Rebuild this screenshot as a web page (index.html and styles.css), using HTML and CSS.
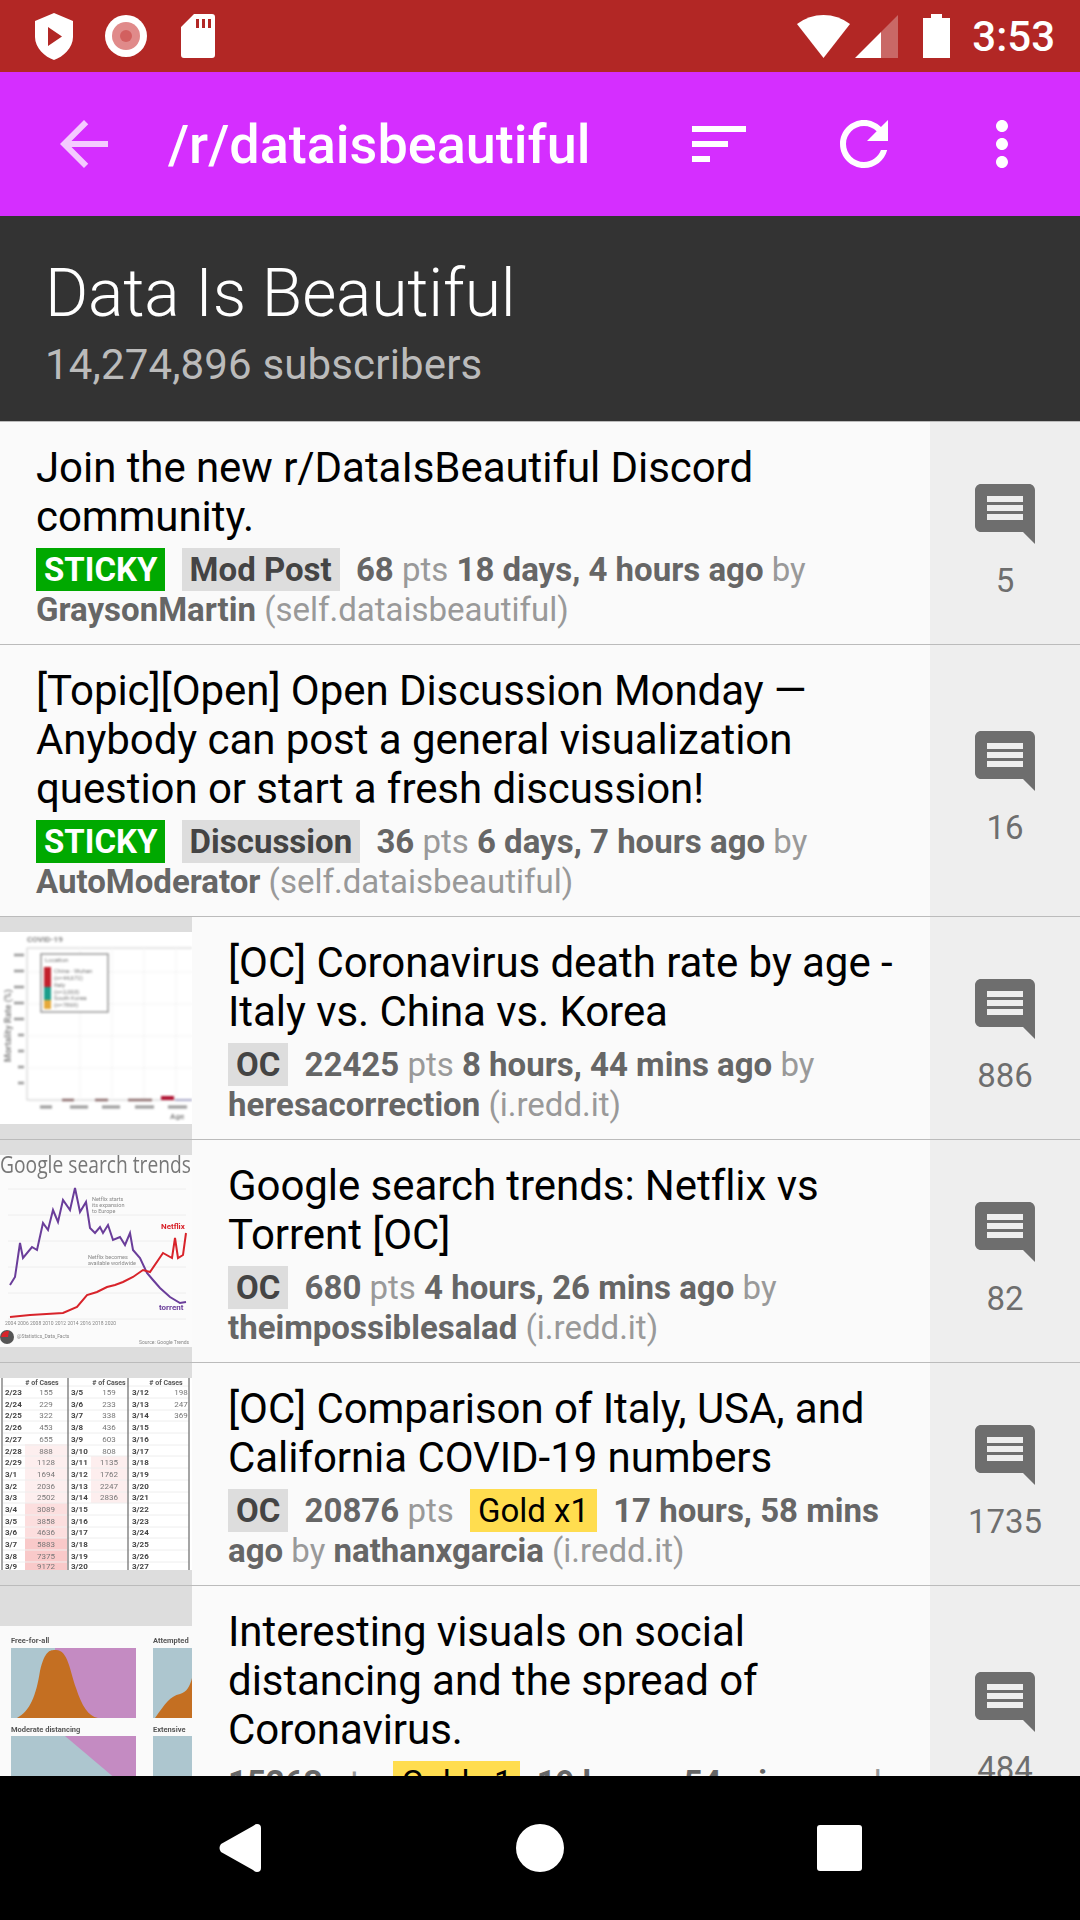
FILE: index.html
```html
<!DOCTYPE html>
<html>
<head>
    <meta charset="UTF-8">
    <title>/r/dataisbeautiful</title>
    <link rel="stylesheet" href="styles.css">
</head>
<body>
<div class="screen">
    <!-- Android status bar -->
    <div class="status-bar">
        <svg class="st-shield" viewBox="0 0 38 47"><path fill="#fff" fill-rule="evenodd" d="M19 0 L38 8 V24 C38 35 28 44 19 47 C10 44 0 35 0 24 V8 Z M13 14 V33 L27 23.5 Z"/></svg>
        <svg class="st-record" viewBox="0 0 42 44"><circle cx="21" cy="22" r="21" fill="#fff"/><circle cx="21" cy="22" r="14" fill="#e08a8a"/><circle cx="21" cy="22" r="6" fill="#d2605f"/></svg>
        <svg class="st-sd" viewBox="0 0 34 44"><path fill="#fff" fill-rule="evenodd" d="M13 0 H31 Q34 0 34 3 V41 Q34 44 31 44 H3 Q0 44 0 41 V13 Z M15 5 V14 H18 V5 Z M21 5 V14 H24 V5 Z M27 5 V14 H30 V5 Z"/></svg>
        <div class="status-right">
            <svg class="st-wifi" viewBox="0 0 53 43"><path fill="#fff" d="M26.5 43 L0 9 Q12 0 26.5 0 Q41 0 53 9 Z"/></svg>
            <svg class="st-signal" viewBox="0 0 43 43"><path fill="#fff" fill-opacity=".3" d="M43 0 V43 H26 V17 Z"/><path fill="#fff" d="M26 17 V43 H0 Z"/></svg>
            <svg class="st-battery" viewBox="0 0 27 44"><path fill="#fff" d="M8 0 H19 V4 H27 V44 H0 V4 H8 Z"/></svg>
            <span class="clock">3:53</span>
        </div>
    </div>

    <!-- toolbar -->
    <div class="toolbar">
        <svg class="tb-icon tb-back" viewBox="0 0 24 24"><path fill="#fff" d="M20 11H7.83l5.59-5.59L12 4l-8 8 8 8 1.41-1.41L7.83 13H20v-2z"/></svg>
        <div class="tb-title">/r/dataisbeautiful</div>
        <svg class="tb-icon tb-sort" viewBox="0 0 24 24"><path fill="#fff" d="M3 18h6v-2H3v2zM3 6v2h18V6H3zm0 7h12v-2H3v2z"/></svg>
        <svg class="tb-icon tb-refresh" viewBox="0 0 24 24"><path fill="#fff" d="M17.65 6.35C16.2 4.9 14.21 4 12 4c-4.42 0-7.99 3.58-7.99 8s3.57 8 7.99 8c3.73 0 6.84-2.55 7.73-6h-2.08c-.82 2.33-3.04 4-5.65 4-3.31 0-6-2.69-6-6s2.69-6 6-6c1.66 0 3.14.69 4.22 1.78L13 11h7V4l-2.35 2.35z"/></svg>
        <svg class="tb-icon tb-more" viewBox="0 0 24 24"><path fill="#fff" d="M12 8c1.1 0 2-.9 2-2s-.9-2-2-2-2 .9-2 2 .9 2 2 2zm0 2c-1.1 0-2 .9-2 2s.9 2 2 2 2-.9 2-2-.9-2-2-2zm0 6c-1.1 0-2 .9-2 2s.9 2 2 2 2-.9 2-2-.9-2-2-2z"/></svg>
    </div>

    <!-- subreddit header -->
    <div class="sub-header">
        <div class="sub-name">Data Is Beautiful</div>
        <div class="sub-count">14,274,896 subscribers</div>
    </div>

    <!-- posts -->
    <div class="post-list">

        <div class="post">
            <div class="post-body">
                <div class="post-title">Join the new r/DataIsBeautiful Discord community.</div>
                <div class="post-meta"><span class="tag tag-sticky">STICKY</span> <span class="tag tag-flair">Mod Post</span> <b>68</b> pts <b>18 days, 4 hours ago</b> by <b>GraysonMartin</b> (self.dataisbeautiful)</div>
            </div>
            <div class="post-comments">
                <svg class="comment-icon" viewBox="0 0 24 24"><path d="M21.99 4c0-1.1-.89-2-1.99-2H4c-1.1 0-2 .9-2 2v12c0 1.1.9 2 2 2h14l4 4-.01-18zM18 14H6v-2h12v2zm0-3H6V9h12v2zm0-3H6V6h12v2z"/></svg>
                <div class="comment-count">5</div>
            </div>
        </div>

        <div class="post">
            <div class="post-body">
                <div class="post-title">[Topic][Open] Open Discussion Monday — Anybody can post a general visualization question or start a fresh discussion!</div>
                <div class="post-meta"><span class="tag tag-sticky">STICKY</span> <span class="tag tag-flair">Discussion</span> <b>36</b> pts <b>6 days, 7 hours ago</b> by <b>AutoModerator</b> (self.dataisbeautiful)</div>
            </div>
            <div class="post-comments">
                <svg class="comment-icon" viewBox="0 0 24 24"><path d="M21.99 4c0-1.1-.89-2-1.99-2H4c-1.1 0-2 .9-2 2v12c0 1.1.9 2 2 2h14l4 4-.01-18zM18 14H6v-2h12v2zm0-3H6V9h12v2zm0-3H6V6h12v2z"/></svg>
                <div class="comment-count">16</div>
            </div>
        </div>

        <div class="post">
            <div class="thumb">
                <svg class="thumb-img" viewBox="0 0 192 192">
                    <rect width="192" height="192" fill="#fff"/>
                    <g class="soft">
                        <text x="27" y="10" font-size="8" font-weight="700" fill="#888">COVID-19</text>
                        <path d="M27 16 H192 M27 16 V168 H192" fill="none" stroke="#ccc" stroke-width="1"/>
                        <path d="M80 16 V168 M112 16 V168 M144 16 V168 M176 16 V168 M27 40 H192 M27 72 H192 M27 104 H192 M27 136 H192" stroke="#f3f3f3" stroke-width="1"/>
                        <rect x="41" y="22" width="67" height="58" fill="#fff" stroke="#999" stroke-width="1.5"/>
                        <rect x="44" y="35" width="7" height="20" fill="#c2202c"/>
                        <rect x="44" y="55" width="7" height="13" fill="#1b9e8b"/>
                        <rect x="44" y="68" width="7" height="9" fill="#e5a93b"/>
                        <text x="45" y="30" font-size="6" fill="#777">Location</text>
                        <text x="54" y="41" font-size="6" fill="#777">China - Wuhan</text>
                        <text x="54" y="48" font-size="6" fill="#777">(n=44,672)</text>
                        <text x="54" y="55" font-size="6" fill="#777">Italy</text>
                        <text x="54" y="62" font-size="6" fill="#777">(n=2,003)</text>
                        <text x="54" y="68" font-size="6" fill="#777">South Korea</text>
                        <text x="54" y="75" font-size="6" fill="#777">(n=7869)</text>
                        <text x="11" y="130" font-size="9" font-weight="700" fill="#888" transform="rotate(-90 11 130)">Mortality Rate (%)</text>
                        <path d="M14 23 H24 M14 39 H24 M14 55 H24 M14 71 H24 M14 87 H24 M18 103 H24 M18 119 H24 M18 135 H24 M18 151 H24" stroke="#999" stroke-width="2.5"/>
                        <path d="M62 168 H74 M95 168 H108 M128 168 H152" stroke="#8a6b6b" stroke-width="2.5"/>
                        <path d="M161 166 H174" stroke="#b01030" stroke-width="4"/>
                        <path d="M175 168 H192" stroke="#a9a9c9" stroke-width="2"/>
                        <path d="M40 175 H52 M70 175 H88 M102 175 H120 M135 175 H154 M168 175 H187" stroke="#999" stroke-width="3"/>
                        <text x="170" y="187" font-size="8" font-weight="700" fill="#888">Age</text>
                    </g>
                </svg>
            </div>
            <div class="post-body">
                <div class="post-title">[OC] Coronavirus death rate by age - Italy vs. China vs. Korea</div>
                <div class="post-meta"><span class="tag tag-flair">OC</span> <b>22425</b> pts <b>8 hours, 44 mins ago</b> by <b>heresacorrection</b> (i.redd.it)</div>
            </div>
            <div class="post-comments">
                <svg class="comment-icon" viewBox="0 0 24 24"><path d="M21.99 4c0-1.1-.89-2-1.99-2H4c-1.1 0-2 .9-2 2v12c0 1.1.9 2 2 2h14l4 4-.01-18zM18 14H6v-2h12v2zm0-3H6V9h12v2zm0-3H6V6h12v2z"/></svg>
                <div class="comment-count">886</div>
            </div>
        </div>

        <div class="post">
            <div class="thumb">
                <svg class="thumb-img" viewBox="0 0 192 192">
                    <rect width="192" height="192" fill="#fbfbfb"/>
                    <g class="soft-less">
                        <text x="0" y="18" font-size="23" font-family="Open Sans" fill="#777" textLength="191" lengthAdjust="spacingAndGlyphs">Google search trends</text>
                        <path d="M8 34 H186 M8 60 H186 M8 86 H186 M8 112 H186 M8 138 H186 M8 164 H186" stroke="#eee" stroke-width="1"/>
                        <polyline fill="none" stroke="#6a3d9a" stroke-width="2" points="10,130 15,122 20,88 23,103 32,92 37,95 43,68 48,75 53,55 58,67 63,45 70,55 75,33 80,57 86,47 90,73 95,78 100,72 103,78 108,70 113,85 120,82 125,90 130,78 133,95 140,103 147,118 153,125 160,133 170,142 180,148 186,147"/>
                        <polyline fill="none" stroke="#d8232a" stroke-width="2" points="10,162 30,160 63,158 77,152 87,140 97,137 107,132 115,130 123,127 133,122 143,115 150,117 163,98 172,103 175,83 178,103 183,100 186,78"/>
                        <text x="161" y="74" font-size="8" font-weight="700" fill="#d8232a">Netflix</text>
                        <text x="159" y="155" font-size="8" font-weight="700" fill="#6a3d9a">torrent</text>
                        <text x="92" y="46" font-size="5.5" fill="#888">Netflix starts</text>
                        <text x="92" y="52" font-size="5.5" fill="#888">its expansion</text>
                        <text x="92" y="58" font-size="5.5" fill="#888">to Europe</text>
                        <text x="88" y="104" font-size="5.5" fill="#888">Netflix becomes</text>
                        <text x="88" y="110" font-size="5.5" fill="#888">available worldwide</text>
                        <text x="5" y="170" font-size="5" fill="#888">2004  2006  2008  2010  2012  2014  2016  2018  2020</text>
                        <circle cx="7" cy="182" r="7" fill="#555"/>
                        <path d="M1 182 A7 7 0 0 1 9 176 L8 182 Z" fill="#d8232a"/>
                        <text x="17" y="183" font-size="5" fill="#888">@Statistics_Data_Facts</text>
                        <text x="139" y="189" font-size="5" fill="#888">Source: Google Trends</text>
                    </g>
                </svg>
            </div>
            <div class="post-body">
                <div class="post-title">Google search trends: Netflix vs Torrent [OC]</div>
                <div class="post-meta"><span class="tag tag-flair">OC</span> <b>680</b> pts <b>4 hours, 26 mins ago</b> by <b>theimpossiblesalad</b> (i.redd.it)</div>
            </div>
            <div class="post-comments">
                <svg class="comment-icon" viewBox="0 0 24 24"><path d="M21.99 4c0-1.1-.89-2-1.99-2H4c-1.1 0-2 .9-2 2v12c0 1.1.9 2 2 2h14l4 4-.01-18zM18 14H6v-2h12v2zm0-3H6V9h12v2zm0-3H6V6h12v2z"/></svg>
                <div class="comment-count">82</div>
            </div>
        </div>

        <div class="post">
            <div class="thumb">
                <svg class="thumb-img" viewBox="0 0 192 192">
                    <rect width="192" height="192" fill="#fff"/>
                    <g class="soft-table">
                        <rect x="25" y="66" width="42" height="126" fill="#fdeeee"/>
                        <rect x="25" y="125" width="42" height="35" fill="#fcdede"/>
                        <rect x="25" y="160" width="42" height="32" fill="#f9c9c9"/>
                        <rect x="91" y="78" width="36" height="47" fill="#fdeeee"/>
                        <path d="M3 8 H189 M3 20 H189 M3 32 H189 M3 43 H189 M3 55 H189 M3 67 H189 M3 78 H189 M3 90 H189 M3 102 H189 M3 114 H189 M3 125 H189 M3 137 H189 M3 149 H189 M3 160 H189 M3 172 H189 M3 184 H189" stroke="#eee" stroke-width="1"/>
                        <path d="M2 0 V192 M68 0 V192 M128 0 V192 M189 0 V192" stroke="#888" stroke-width="1.5"/>
                        <g class="tb-head"><text x="42" y="6.5" text-anchor="middle"># of Cases</text><text x="109" y="6.5" text-anchor="middle"># of Cases</text><text x="166" y="6.5" text-anchor="middle"># of Cases</text></g>
                        <g class="tb-date">
                            <text x="5" y="17">2/23</text><text x="5" y="28.7">2/24</text><text x="5" y="40.4">2/25</text><text x="5" y="52.1">2/26</text><text x="5" y="63.8">2/27</text><text x="5" y="75.5">2/28</text><text x="5" y="87.2">2/29</text><text x="5" y="98.9">3/1</text><text x="5" y="110.6">3/2</text><text x="5" y="122.3">3/3</text><text x="5" y="134">3/4</text><text x="5" y="145.7">3/5</text><text x="5" y="157.4">3/6</text><text x="5" y="169.1">3/7</text><text x="5" y="180.8">3/8</text><text x="5" y="191">3/9</text>
                            <text x="71" y="17">3/5</text><text x="71" y="28.7">3/6</text><text x="71" y="40.4">3/7</text><text x="71" y="52.1">3/8</text><text x="71" y="63.8">3/9</text><text x="71" y="75.5">3/10</text><text x="71" y="87.2">3/11</text><text x="71" y="98.9">3/12</text><text x="71" y="110.6">3/13</text><text x="71" y="122.3">3/14</text><text x="71" y="134">3/15</text><text x="71" y="145.7">3/16</text><text x="71" y="157.4">3/17</text><text x="71" y="169.1">3/18</text><text x="71" y="180.8">3/19</text><text x="71" y="191">3/20</text>
                            <text x="132" y="17">3/12</text><text x="132" y="28.7">3/13</text><text x="132" y="40.4">3/14</text><text x="132" y="52.1">3/15</text><text x="132" y="63.8">3/16</text><text x="132" y="75.5">3/17</text><text x="132" y="87.2">3/18</text><text x="132" y="98.9">3/19</text><text x="132" y="110.6">3/20</text><text x="132" y="122.3">3/21</text><text x="132" y="134">3/22</text><text x="132" y="145.7">3/23</text><text x="132" y="157.4">3/24</text><text x="132" y="169.1">3/25</text><text x="132" y="180.8">3/26</text><text x="132" y="191">3/27</text>
                        </g>
                        <g class="tb-val" text-anchor="middle">
                            <text x="46" y="17">155</text><text x="46" y="28.7">229</text><text x="46" y="40.4">322</text><text x="46" y="52.1">453</text><text x="46" y="63.8">655</text><text x="46" y="75.5">888</text><text x="46" y="87.2">1128</text><text x="46" y="98.9">1694</text><text x="46" y="110.6">2036</text><text x="46" y="122.3">2502</text><text x="46" y="134">3089</text><text x="46" y="145.7">3858</text><text x="46" y="157.4">4636</text><text x="46" y="169.1">5883</text><text x="46" y="180.8">7375</text><text x="46" y="191">9172</text>
                            <text x="109" y="17">159</text><text x="109" y="28.7">233</text><text x="109" y="40.4">338</text><text x="109" y="52.1">436</text><text x="109" y="63.8">603</text><text x="109" y="75.5">808</text><text x="109" y="87.2">1135</text><text x="109" y="98.9">1762</text><text x="109" y="110.6">2247</text><text x="109" y="122.3">2836</text>
                            <text x="181" y="17">198</text><text x="181" y="28.7">247</text><text x="181" y="40.4">369</text>
                        </g>
                    </g>
                </svg>
            </div>
            <div class="post-body">
                <div class="post-title">[OC] Comparison of Italy, USA, and California COVID-19 numbers</div>
                <div class="post-meta"><span class="tag tag-flair">OC</span> <b>20876</b> pts <span class="tag tag-gold">Gold x1</span> <b>17 hours, 58 mins ago</b> by <b>nathanxgarcia</b> (i.redd.it)</div>
            </div>
            <div class="post-comments">
                <svg class="comment-icon" viewBox="0 0 24 24"><path d="M21.99 4c0-1.1-.89-2-1.99-2H4c-1.1 0-2 .9-2 2v12c0 1.1.9 2 2 2h14l4 4-.01-18zM18 14H6v-2h12v2zm0-3H6V9h12v2zm0-3H6V6h12v2z"/></svg>
                <div class="comment-count">1735</div>
            </div>
        </div>

        <div class="post">
            <div class="thumb">
                <svg class="thumb-img" viewBox="0 0 192 192">
                    <rect width="192" height="192" fill="#fafafa"/>
                    <g class="soft-table">
                        <text x="11" y="17" font-size="7.5" font-weight="700" fill="#555">Free-for-all</text>
                        <text x="153" y="17" font-size="7.5" font-weight="700" fill="#555">Attempted</text>
                        <text x="11" y="106" font-size="7.5" font-weight="700" fill="#555">Moderate distancing</text>
                        <text x="153" y="106" font-size="7.5" font-weight="700" fill="#555">Extensive</text>
                        <rect x="11" y="22" width="125" height="70" fill="#c48bc2"/>
                        <path d="M11 22 H55 V92 H11 Z" fill="#adc6cf"/>
                        <path d="M17 92 C30 85 36 70 40 45 C45 24 50 24 56 24 C68 24 70 45 76 62 C82 80 88 90 98 92 Z" fill="#c46f22"/>
                        <rect x="153" y="22" width="39" height="70" fill="#adc6cf"/>
                        <path d="M155 92 C165 78 170 70 180 68 C187 66 190 60 192 52 V92 Z" fill="#c46f22"/>
                        <rect x="11" y="110" width="125" height="82" fill="#adc6cf"/>
                        <path d="M65 110 H136 V170 Z" fill="#c48bc2"/>
                        <path d="M48 192 C56 182 62 180 70 179 C78 179 84 184 90 192 Z" fill="#c46f22"/>
                        <rect x="153" y="110" width="39" height="82" fill="#adc6cf"/>
                    </g>
                </svg>
            </div>
            <div class="post-body">
                <div class="post-title">Interesting visuals on social distancing and the spread of Coronavirus.</div>
                <div class="post-meta"><b>15263</b> pts <span class="tag tag-gold">Gold x1</span> <b>19 hours, 54 mins ago</b> by <b>covid_viz</b> (i.redd.it)</div>
            </div>
            <div class="post-comments">
                <svg class="comment-icon" viewBox="0 0 24 24"><path d="M21.99 4c0-1.1-.89-2-1.99-2H4c-1.1 0-2 .9-2 2v12c0 1.1.9 2 2 2h14l4 4-.01-18zM18 14H6v-2h12v2zm0-3H6V9h12v2zm0-3H6V6h12v2z"/></svg>
                <div class="comment-count">484</div>
            </div>
        </div>

    </div>

    <!-- Android nav bar -->
    <div class="nav-bar">
        <svg class="nav-back" viewBox="0 0 42 48"><path fill="#fff" d="M38 0 Q42 0 42 4 V44 Q42 48 38 48 Q36 48 34 46 L2 28 Q-1 24 2 20 L34 2 Q36 0 38 0 Z"/></svg>
        <div class="nav-home"></div>
        <div class="nav-recent"></div>
    </div>
</div>
</body>
</html>
```

FILE: styles.css
```css
html, body {
    margin: 0;
    padding: 0;
}
body {
    font-family: Roboto, "Liberation Sans", sans-serif;
    background-color: #000;
}
.screen {
    width: 1080px;
    height: 1920px;
    display: flex;
    flex-direction: column;
    overflow: hidden;
}

/* status bar */
.status-bar {
    height: 72px;
    flex: none;
    background-color: #b22725;
    display: flex;
    align-items: center;
    padding: 0 25px 0 35px;
}
.status-bar svg {
    display: block;
}
.st-shield { width: 38px; height: 47px; margin-right: 32px; }
.st-record { width: 42px; height: 44px; margin-right: 34px; }
.st-sd { width: 34px; height: 44px; }
.status-right {
    margin-left: auto;
    display: flex;
    align-items: center;
}
.st-wifi { width: 53px; height: 43px; margin-right: 5px; }
.st-signal { width: 43px; height: 43px; margin-right: 25px; }
.st-battery { width: 27px; height: 44px; margin-right: 22px; }
.clock {
    color: #fff;
    font-size: 42px;
    font-weight: 500;
}

/* toolbar */
.toolbar {
    height: 144px;
    flex: none;
    background-color: #d52eff;
    display: flex;
    align-items: center;
}
.tb-icon {
    width: 72px;
    height: 72px;
    flex: none;
}
.tb-back {
    margin-left: 48px;
    opacity: .75;
}
.tb-title {
    color: #fff;
    font-size: 54px;
    font-weight: 500;
    margin-left: 48px;
    width: 515px;
}
.tb-refresh { margin-left: 73px; }
.tb-more { margin-left: 66px; }

/* subreddit header */
.sub-header {
    height: 205px;
    flex: none;
    box-sizing: border-box;
    background-color: #333;
    padding: 39px 45px 0;
}
.sub-name {
    color: #fff;
    font-size: 66px;
    font-weight: 300;
    line-height: 78px;
    letter-spacing: -.2px;
}
.sub-count {
    color: #bbb;
    font-size: 42px;
    line-height: 50px;
    margin-top: 7px;
    letter-spacing: .15px;
}

/* post rows */
.post-list {
    flex: 1;
    min-height: 0;
    overflow: hidden;
    background-color: #fafafa;
    border-top: 1px solid #bbb;
}
.post {
    display: flex;
    border-bottom: 1px solid #bbb;
}
.thumb {
    width: 192px;
    flex: none;
    background-color: #ddd;
    display: flex;
    align-items: center;
}
.thumb-img {
    display: block;
    width: 192px;
    height: 192px;
}
.soft { filter: blur(.8px); }
.soft-less { filter: blur(.5px); }
.soft-table { filter: blur(.5px); }
.tb-head text { font-size: 7px; font-weight: 700; fill: #555; }
.tb-date text { font-size: 8px; font-weight: 700; fill: #444; }
.tb-val text { font-size: 8px; fill: #777; }
.post-body {
    flex: 1;
    min-width: 0;
    padding: 21px 16px 14px 36px;
}
.post-title {
    color: #000;
    font-size: 42px;
    line-height: 49px;
    letter-spacing: -.06px;
}
.post-meta {
    color: #999;
    font-size: 33px;
    line-height: 40px;
    margin-top: 9px;
}
.post-meta b {
    color: #666;
    font-weight: 700;
}
.tag {
    padding: 2px 8px;
    margin-right: 8px;
}
.tag-sticky {
    background-color: #00a900;
    color: #fff;
    font-weight: 700;
}
.tag-flair {
    background-color: #ddd;
    color: #444;
    font-weight: 700;
}
.tag-gold {
    background-color: #ffdd4f;
    color: #000;
    margin-left: 8px;
}
.post-comments {
    width: 150px;
    flex: none;
    box-sizing: border-box;
    padding-top: 11px;
    background-color: #eee;
    display: flex;
    flex-direction: column;
    align-items: center;
    justify-content: center;
}
.comment-icon {
    display: block;
    width: 72px;
    height: 72px;
    fill: #6e6e6e;
}
.comment-count {
    color: #6e6e6e;
    font-size: 33px;
    line-height: 39px;
    margin-top: 11px;
}

/* nav bar */
.nav-bar {
    height: 144px;
    flex: none;
    background-color: #000;
    display: flex;
    align-items: center;
}
.nav-back { width: 42px; height: 48px; margin-left: 219px; display: block; }
.nav-home { width: 48px; height: 48px; border-radius: 50%; background-color: #fff; margin-left: 255px; }
.nav-recent { width: 45px; height: 46px; border-radius: 3px; background-color: #fff; margin-left: 253px; }
```
